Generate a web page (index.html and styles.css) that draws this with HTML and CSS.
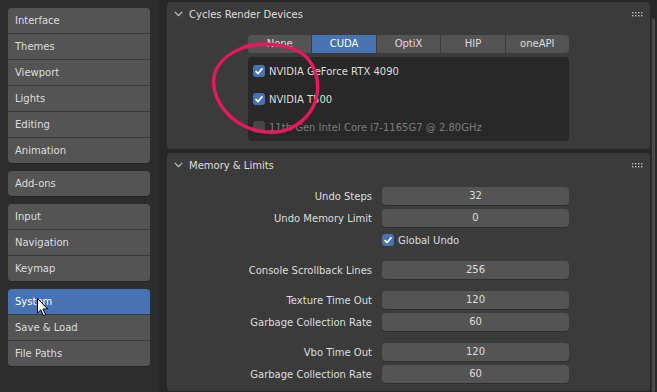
FILE: index.html
```html
<!DOCTYPE html>
<html lang="en">
<head>
  <meta charset="UTF-8" />
  <title>Preferences - System</title>
  <link rel="stylesheet" href="styles.css">
</head>
<body>
  <div class="app">

    <!-- Navigation -->
    <div class="nav">
      <div class="nav-group">
        <div class="nav-item">Interface</div>
        <div class="nav-item">Themes</div>
        <div class="nav-item">Viewport</div>
        <div class="nav-item">Lights</div>
        <div class="nav-item">Editing</div>
        <div class="nav-item">Animation</div>
      </div>
      <div class="nav-group">
        <div class="nav-item">Add-ons</div>
      </div>
      <div class="nav-group">
        <div class="nav-item">Input</div>
        <div class="nav-item">Navigation</div>
        <div class="nav-item">Keymap</div>
      </div>
      <div class="nav-group">
        <div class="nav-item active">System</div>
        <div class="nav-item">Save &amp; Load</div>
        <div class="nav-item">File Paths</div>
      </div>
    </div>

    <!-- Main region -->
    <div class="main">
      <div class="panels">

        <div class="panel devices">
          <div class="panel-header">
            <svg class="chevron" width="9" height="6" viewBox="0 0 9 6"><path d="M0.8 0.8 L4.5 4.6 L8.2 0.8" /></svg>
            <span>Cycles Render Devices</span>
            <svg class="grip" width="11" height="5" viewBox="0 0 11 5">
              <rect x="0" y="0" width="1.4" height="1.4" /><rect x="3" y="0" width="1.4" height="1.4" /><rect x="6" y="0" width="1.4" height="1.4" /><rect x="9" y="0" width="1.4" height="1.4" />
              <rect x="0" y="3" width="1.4" height="1.4" /><rect x="3" y="3" width="1.4" height="1.4" /><rect x="6" y="3" width="1.4" height="1.4" /><rect x="9" y="3" width="1.4" height="1.4" />
            </svg>
          </div>
          <div class="panel-body">
            <div class="tabs">
              <div class="tab">None</div>
              <div class="tab active">CUDA</div>
              <div class="tab">OptiX</div>
              <div class="tab">HIP</div>
              <div class="tab">oneAPI</div>
            </div>
            <div class="device-list">
              <div class="device">
                <span class="check on"><svg width="12" height="12" viewBox="0 0 12 12"><path d="M2.6 6.2 L5 8.6 L9.4 3.4" /></svg></span>
                NVIDIA GeForce RTX 4090
              </div>
              <div class="device">
                <span class="check on"><svg width="12" height="12" viewBox="0 0 12 12"><path d="M2.6 6.2 L5 8.6 L9.4 3.4" /></svg></span>
                NVIDIA T500
              </div>
              <div class="device disabled">
                <span class="check"></span>
                11th Gen Intel Core i7-1165G7 @ 2.80GHz
              </div>
            </div>
          </div>
        </div>

        <div class="panel memory">
          <div class="panel-header">
            <svg class="chevron" width="9" height="6" viewBox="0 0 9 6"><path d="M0.8 0.8 L4.5 4.6 L8.2 0.8" /></svg>
            <span>Memory &amp; Limits</span>
            <svg class="grip" width="11" height="5" viewBox="0 0 11 5">
              <rect x="0" y="0" width="1.4" height="1.4" /><rect x="3" y="0" width="1.4" height="1.4" /><rect x="6" y="0" width="1.4" height="1.4" /><rect x="9" y="0" width="1.4" height="1.4" />
              <rect x="0" y="3" width="1.4" height="1.4" /><rect x="3" y="3" width="1.4" height="1.4" /><rect x="6" y="3" width="1.4" height="1.4" /><rect x="9" y="3" width="1.4" height="1.4" />
            </svg>
          </div>
          <div class="panel-body settings">
            <div class="group">
              <div class="row"><label>Undo Steps</label><div class="field">32</div></div>
              <div class="row"><label>Undo Memory Limit</label><div class="field">0</div></div>
              <div class="row">
                <label></label>
                <div class="toggle">
                  <span class="check on"><svg width="12" height="12" viewBox="0 0 12 12"><path d="M2.6 6.2 L5 8.6 L9.4 3.4" /></svg></span>
                  Global Undo
                </div>
              </div>
            </div>
            <div class="group">
              <div class="row"><label>Console Scrollback Lines</label><div class="field">256</div></div>
            </div>
            <div class="group">
              <div class="row"><label>Texture Time Out</label><div class="field">120</div></div>
              <div class="row"><label>Garbage Collection Rate</label><div class="field">60</div></div>
            </div>
            <div class="group">
              <div class="row"><label>Vbo Time Out</label><div class="field">120</div></div>
              <div class="row"><label>Garbage Collection Rate</label><div class="field">60</div></div>
            </div>
          </div>
        </div>

      </div>
      <div class="scrollbar"></div>
    </div>
  </div>

  <!-- Hand-drawn annotation and mouse pointer on top of the UI -->
  <svg class="overlay" width="657" height="392" viewBox="0 0 657 392">
    <path class="scribble" d="M247 47 C262 42 285 44 300 52 C313 60 320 78 317 95 C314 112 301 126 283 131 C264 135 245 129 232 118 C218 106 212 90 214 77 C216 65 226 55 240 49 C244 47 247 46 251 45" />
    <path class="cursor" d="M37.5 298.5 L37.5 313 L40.8 309.8 L43.4 315.6 L45.6 314.6 L43 308.9 L47.6 308.9 Z" />
  </svg>
</body>
</html>
```

FILE: styles.css
```css
body {
  margin: 0;
  background: #2d2d2d;
  font-family: "DejaVu Sans", Inter, sans-serif;
  font-size: 10px;
  color: #dedede;
  overflow: hidden;
}

.app {
  display: flex;
  height: 392px;
  width: 657px;
}

/* Navigation */
.nav {
  width: 159px;
  padding: 8px 0 0 8px;
  box-sizing: border-box;
  background: #2d2d2d;
  display: flex;
  flex-direction: column;
  gap: 8px;
}

.nav-group {
  width: 142px;
  display: flex;
  flex-direction: column;
  gap: 1px;
  background: #3a3a3a;
  border-radius: 4px;
  overflow: hidden;
  box-shadow: 0 1px 0 #252525;
}

.nav-item {
  height: 25px;
  line-height: 25px;
  padding-left: 7px;
  background: #545454;
}

.nav-item.active {
  background: #4772b3;
  color: #fff;
}

/* Main region */
.main {
  flex: 1;
  display: flex;
  background: #282828;
  padding-left: 8px;
}

.panels {
  flex: 1;
  display: flex;
  flex-direction: column;
  gap: 4px;
  padding-top: 2px;
}

.scrollbar {
  width: 3px;
  margin: 18px 2px 0 2px;
  background: #4a4a4a;
  border-radius: 2px;
}

.panel {
  background: #3b3b3b;
  border-radius: 4px;
}

.panel-header {
  height: 24px;
  display: flex;
  align-items: center;
  padding: 0 7px;
  gap: 6px;
}

.panel-header span {
  flex: 1;
}

.chevron path {
  fill: none;
  stroke: #c8c8c8;
  stroke-width: 1.2;
}

.grip rect {
  fill: #bdbdbd;
}

.panel-body {
  padding: 9px 81px 8px 81px;
}

/* Device tabs */
.tabs {
  display: flex;
  gap: 1px;
  border-radius: 4px;
  overflow: hidden;
  margin-bottom: 4px;
}

.tab {
  flex: 1;
  height: 18px;
  line-height: 18px;
  text-align: center;
  background: #545454;
}

.tab.active {
  background: #4772b3;
  color: #fff;
}

.device-list {
  background: #282828;
  border-radius: 4px;
  padding: 0 5px;
}

.device {
  height: 28px;
  display: flex;
  align-items: center;
  gap: 4px;
}

.device.disabled {
  color: #7c7c7c;
}

.check {
  width: 12px;
  height: 12px;
  border-radius: 3px;
  background: #474747;
  display: inline-block;
  flex: none;
}

.check.on {
  background: #4772b3;
}

.check svg {
  display: block;
}

.check path {
  fill: none;
  stroke: #fff;
  stroke-width: 1.7;
}

/* Memory settings */
.settings {
  padding: 10px 81px 8px 20px;
  display: flex;
  flex-direction: column;
  gap: 12px;
}

.group {
  display: flex;
  flex-direction: column;
  gap: 4px;
}

.row {
  display: grid;
  grid-template-columns: 1fr 187px;
  column-gap: 10px;
  height: 18px;
  align-items: center;
}

.row label {
  text-align: right;
  white-space: nowrap;
}

.field {
  height: 18px;
  line-height: 18px;
  text-align: center;
  background: #545454;
  border-radius: 4px;
  box-shadow: 0 1px 0 #2e2e2e;
}

.toggle {
  display: flex;
  align-items: center;
  gap: 4px;
}

/* Overlay */
.overlay {
  position: absolute;
  left: 0;
  top: 0;
  pointer-events: none;
}

.scribble {
  fill: none;
  stroke: #e8185e;
  stroke-width: 3.4;
  stroke-linecap: round;
  stroke-linejoin: round;
}

.cursor {
  fill: #fff;
  stroke: #000;
  stroke-width: 1;
  stroke-linejoin: round;
}
```
